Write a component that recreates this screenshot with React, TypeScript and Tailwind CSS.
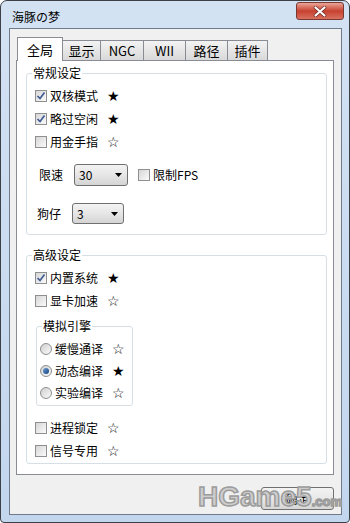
const font = "font-['Noto_Sans_CJK_SC','Noto_Sans',sans-serif]";

function Box({ checked }: { checked?: boolean }) {
  return (
    <span className="w-[12px] h-[12px] shrink-0 border border-[#8e8f8f] bg-linear-to-br from-[#d6d6d6] to-[#fbfbfb] flex items-center justify-center">
      {checked && (
        <svg width="10" height="10" viewBox="0 0 10 10">
          <path d="M1.5 5 L4 7.5 L8.5 1.5" fill="none" stroke="#3f5c94" strokeWidth="1.7" />
        </svg>
      )}
    </span>
  );
}

function Radio({ checked }: { checked?: boolean }) {
  return (
    <span className="w-[12px] h-[12px] shrink-0 rounded-full border border-[#8e8f8f] bg-linear-to-br from-[#d0d0d0] to-[#fafafa] flex items-center justify-center">
      {checked && <span className="w-[6px] h-[6px] rounded-full bg-linear-to-br from-[#6fa2d8] to-[#123e7a]" />}
    </span>
  );
}

function Star({ filled }: { filled?: boolean }) {
  return (
    <span className="ml-[9px] text-[14px] leading-none font-['DejaVu_Sans',sans-serif]">
      {filled ? "★" : "☆"}
    </span>
  );
}

function CheckRow({ label, checked, star }: { label: string; checked?: boolean; star?: boolean }) {
  return (
    <div className="flex items-center h-[23px]">
      <Box checked={checked} />
      <span className="ml-[3px] leading-[14px]">{label}</span>
      <Star filled={star} />
    </div>
  );
}

function RadioRow({ label, checked, star }: { label: string; checked?: boolean; star?: boolean }) {
  return (
    <div className="flex items-center h-[22px]">
      <Radio checked={checked} />
      <span className="ml-[3px] leading-[14px]">{label}</span>
      <Star filled={star} />
    </div>
  );
}

function Select({ value, w, h }: { value: string; w: string; h: string }) {
  return (
    <div className={`${w} ${h} ml-[11px] border border-[#707070] rounded-[3px] bg-linear-to-b from-[#f3f3f3] via-[#e6e6e6] to-[#d4d4d4] flex items-center pl-[4px] pr-[5px]`}>
      <span className="flex-1 leading-[14px]">{value}</span>
      <svg width="7" height="4" viewBox="0 0 7 4">
        <path d="M0 0 H7 L3.5 4 Z" fill="#000" />
      </svg>
    </div>
  );
}

const tabs = [
  { name: "显示", w: "w-[39px]" },
  { name: "NGC", w: "w-[44px]" },
  { name: "WII", w: "w-[43px]" },
  { name: "路径", w: "w-[43px]" },
  { name: "插件", w: "w-[41px]" },
];

export default function App() {
  return (
    <div className={`relative w-[350px] h-[523px] overflow-hidden rounded-t-[7px] rounded-b-[4px] border border-[#3c4047] bg-linear-to-b from-[#d3e2f3] to-[#c2d6ee] flex flex-col text-[12px] text-black ${font}`}>
      {/* Title bar */}
      <div className="h-[27px] flex items-start shrink-0">
        <span className="pl-[11px] pt-[9px] leading-[14px]">海豚の梦</span>
        <div className="ml-auto mr-[5px] mt-[1px] w-[48px] h-[18px] rounded-[3px] border border-[#7a3a33] bg-linear-to-b from-[#eaa497] via-[#c7402f] to-[#d9705f] flex items-center justify-center">
          <svg width="14" height="11" viewBox="0 0 14 11">
            <path d="M2.5 1.5 L11.5 9.5 M11.5 1.5 L2.5 9.5" stroke="#6b2a22" strokeWidth="3.6" strokeLinecap="round" />
            <path d="M2.5 1.5 L11.5 9.5 M11.5 1.5 L2.5 9.5" stroke="#ffffff" strokeWidth="2.2" strokeLinecap="round" />
          </svg>
        </div>
      </div>

      {/* Client */}
      <div className="flex-1 ml-[8px] mr-[7px] mb-[7px] border border-[#6f7b8a] bg-[#f0f0f0] flex flex-col pl-[6px] pr-[7px] pt-[8px]">
        {/* Tabs */}
        <div className="flex items-end h-[23px] pl-px">
          <div className="relative z-10 w-[46px] h-[24px] -mb-px border border-b-0 border-[#898c95] bg-white flex items-center justify-center text-[13px] leading-[14px]">
            全局
          </div>
          {tabs.map((t) => (
            <div
              key={t.name}
              className={`${t.w} h-[20px] -ml-px border border-b-0 border-[#898c95] bg-linear-to-b from-[#f3f3f3] to-[#d9d9d9] flex items-center justify-center text-[13px] leading-[14px]`}
            >
              {t.name}
            </div>
          ))}
        </div>

        {/* Panel */}
        <div className="h-[415px] border border-[#898c95] bg-white flex flex-col pl-[9px] pr-[6px]">
          {/* 常规设定 */}
          <div className="relative mt-[12px] border border-[#d5dfe5] rounded-[3px] pt-[10px] pl-[8px] pb-[10px]">
            <span className="absolute -top-[8px] left-[5px] bg-white px-px leading-[14px]">常规设定</span>
            <CheckRow label="双核模式" checked star />
            <CheckRow label="略过空闲" checked star />
            <CheckRow label="用金手指" />
            <div className="flex items-center h-[22px] mt-[11px]">
              <span className="ml-[4px] leading-[14px]">限速</span>
              <Select value="30" w="w-[54px]" h="h-[22px]" />
              <span className="ml-[10px]"><Box /></span>
              <span className="ml-[3px] leading-[14px]">限制FPS</span>
            </div>
            <div className="flex items-center h-[21px] mt-[17px]">
              <span className="ml-[2px] leading-[14px]">狗仔</span>
              <Select value="3" w="w-[52px]" h="h-[21px]" />
            </div>
          </div>

          {/* 高级设定 */}
          <div className="relative mt-[20px] border border-[#d5dfe5] rounded-[3px] pt-[10px] pl-[8px] pb-px">
            <span className="absolute -top-[8px] left-[5px] bg-white px-px leading-[14px]">高级设定</span>
            <CheckRow label="内置系统" checked star />
            <CheckRow label="显卡加速" />
            <div className="relative mt-[14px] ml-px w-[97px] border border-[#d5dfe5] rounded-[3px] pt-[11px] pl-[3px] pb-px">
              <span className="absolute -top-[8px] left-[5px] bg-white px-px leading-[14px]">模拟引擎</span>
              <RadioRow label="缓慢通译" />
              <RadioRow label="动态编译" checked star />
              <RadioRow label="实验编译" />
            </div>
            <div className="mt-[10px]">
              <CheckRow label="进程锁定" />
              <CheckRow label="信号专用" />
            </div>
          </div>
        </div>

        {/* Buttons */}
        <div className="flex justify-end mt-[12px]">
          <div className="w-[73px] h-[23px] border border-[#707070] rounded-[3px] bg-linear-to-b from-[#f3f3f3] via-[#e8e8e8] to-[#d6d6d6] flex items-center justify-center leading-[14px]">
            确定
          </div>
        </div>
      </div>

      {/* Watermark */}
      <div className="absolute left-[197px] top-[482px] flex items-baseline font-['Liberation_Sans',sans-serif] font-bold text-[#cdcdcd] [-webkit-text-stroke:1.5px_#9c9c9c] pointer-events-none">
        <span className="text-[28px] leading-none">HGame5</span>
        <span className="text-[13px] leading-none">.com</span>
      </div>
    </div>
  );
}
